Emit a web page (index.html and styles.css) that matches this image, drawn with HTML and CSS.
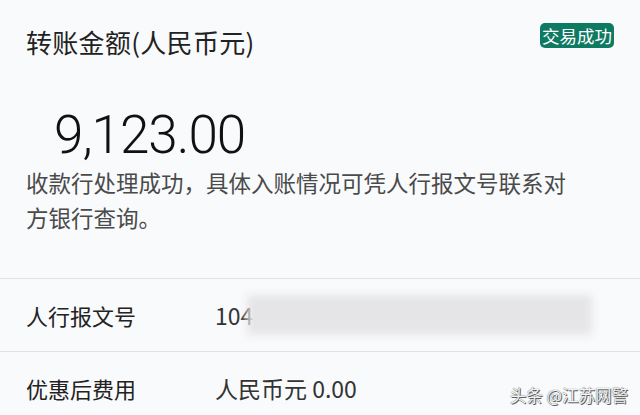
FILE: index.html
```html
<!DOCTYPE html>
<html lang="zh-CN">
<head>
<meta charset="utf-8">
<title>转账详情</title>
<link rel="stylesheet" href="styles.css">
</head>
<body>
<main class="page">
  <header class="header">
    <h1 class="title">转账金额(人民币元)</h1>
    <span class="badge">交易成功</span>
  </header>
  <div class="amount">9,123.00</div>
  <p class="desc">收款行处理成功，具体入账情况可凭人行报文号联系对方银行查询。</p>
  <div class="rows">
    <div class="row">
      <span class="label">人行报文号</span>
      <span class="value">104<span class="redact"></span></span>
    </div>
    <div class="row">
      <span class="label">优惠后费用</span>
      <span class="value">人民币元 0.00</span>
    </div>
  </div>
  <div class="watermark">头条 @江苏网警</div>
</main>
</body>
</html>
```
FILE: styles.css
```css
html, body {
  margin: 0;
  padding: 0;
  background: #f9fafc;
}
body {
  font-family: "Noto Sans CJK SC", "Noto Sans", sans-serif;
  color: #222;
  overflow: hidden;
}
.page {
  position: relative;
  width: 640px;
  height: 415px;
  overflow: hidden;
}
.header {
  display: flex;
  justify-content: space-between;
  align-items: flex-start;
  padding: 23px 26px 0 26px;
}
.title {
  margin: 0;
  font-size: 26px;
  font-weight: 400;
  line-height: 38px;
  letter-spacing: 0.3px;
  color: #222;
}
.badge {
  display: inline-block;
  height: 25px;
  line-height: 25px;
  padding: 0 2px;
  background: #0f7a62;
  color: #fff;
  font-size: 17.5px;
  border-radius: 5px;
}
.amount {
  margin-top: 44px;
  padding-left: 54px;
  font-family: Roboto, "Noto Sans", sans-serif;
  font-weight: 300;
  font-size: 53px;
  line-height: 60px;
  letter-spacing: -1px;
  color: #111;
}
.desc {
  margin: 0;
  padding: 0 70px 0 26px;
  font-size: 22.5px;
  line-height: 35px;
  color: #4a4a4a;
}
.rows {
  margin-top: 43px;
}
.row {
  display: flex;
  align-items: center;
  border-top: 1px solid #e2e2e5;
  padding: 20px 26px;
  height: 32px;
  line-height: 32px;
}
.label {
  width: 189px;
  flex: none;
  font-size: 22px;
  color: #222;
}
.value {
  display: flex;
  align-items: center;
  font-size: 23px;
  color: #333;
}
.redact {
  display: inline-block;
  width: 345px;
  height: 40px;
  margin-left: -6px;
  background: #e5e5e8;
  filter: blur(4px);
}
.watermark {
  position: absolute;
  right: 12px;
  bottom: 10px;
  font-size: 16.5px;
  line-height: 20px;
  color: #f4f4f4;
  text-shadow: 0 0 1px #333, 1px 1px 0 #666;
}
```
